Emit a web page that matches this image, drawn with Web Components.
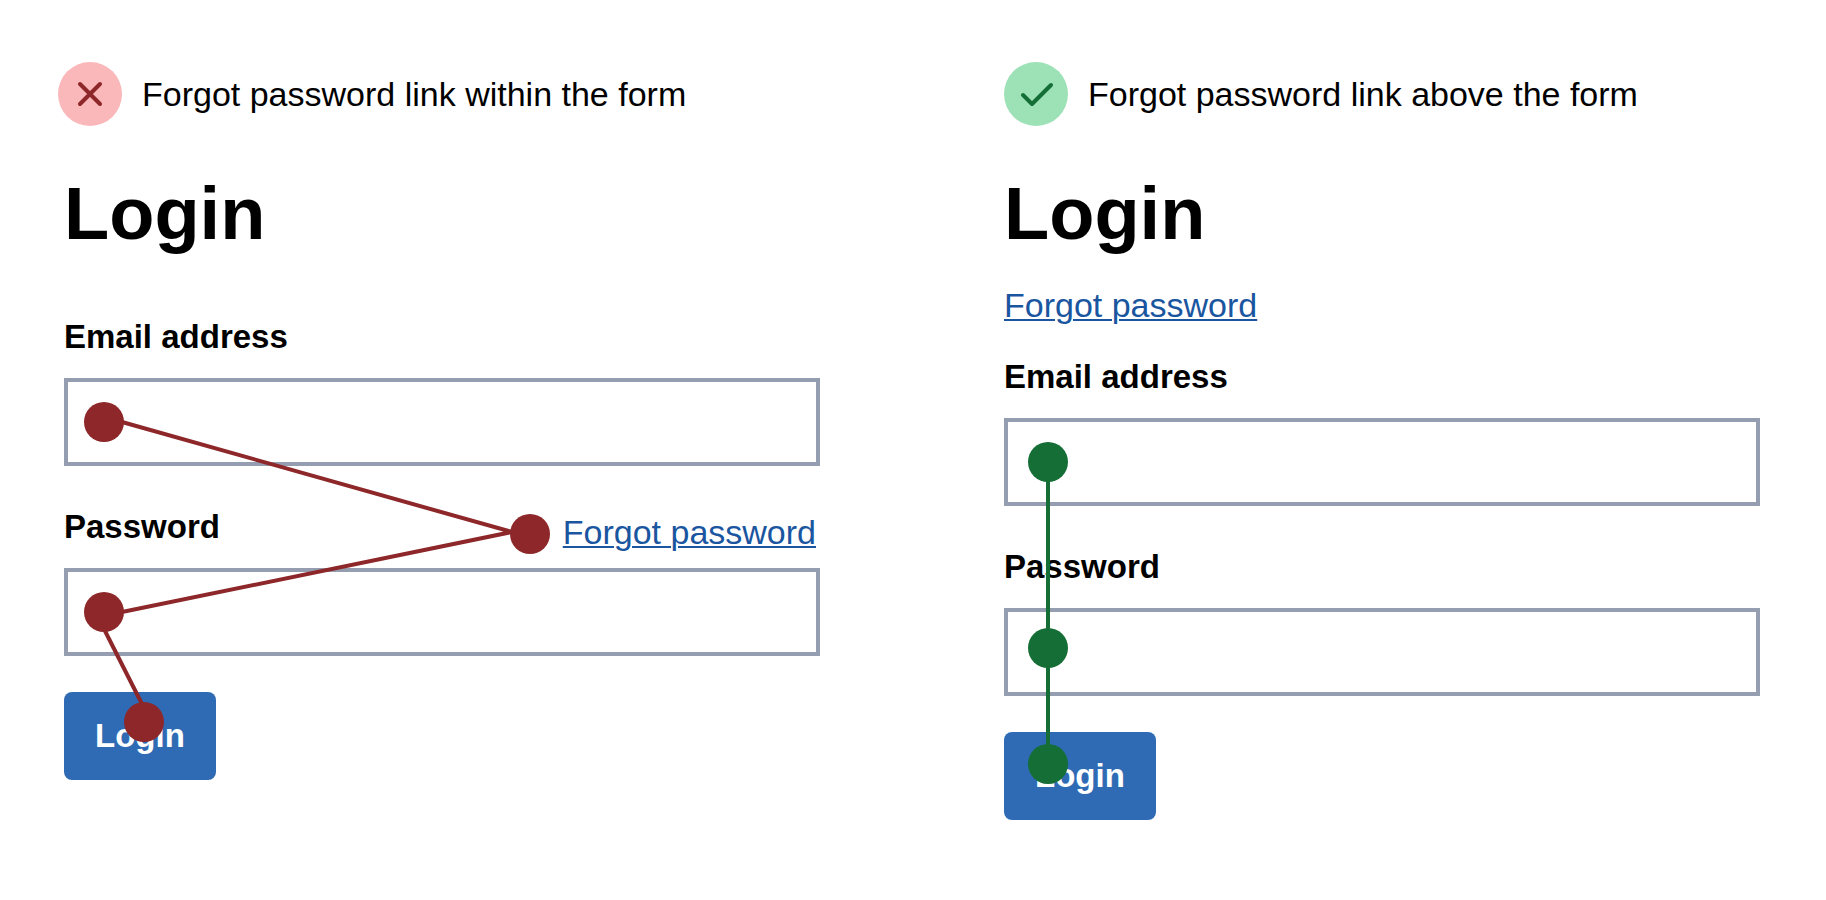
<!DOCTYPE html>
<html lang="en">
<head>
<meta charset="utf-8">
<meta name="viewport" content="width=device-width, initial-scale=1">
<title>Forgot password link placement</title>
<style>
  body {
    margin: 0;
    background: #fff;
    color: #000;
    font-family: "Liberation Sans", Arial, sans-serif;
    font-size: 34px;
    line-height: 42px;
  }
</style>
</head>
<body>
<comparison-board>
  <example-panel verdict="bad">
    <span slot="caption">Forgot password link within the form</span>
    <login-form>
      <text-field label="Email address" type="email"></text-field>
      <text-field label="Password" type="password">
        <text-link slot="aside" href="#forgot">Forgot password</text-link>
      </text-field>
      <action-button slot="action">Login</action-button>
      <focus-path slot="path" tone="bad"
        stops="40 106, -290 218, 40 296, 80 406"
        legs="58 106 -308 216 58 296, 40 313 79 390"></focus-path>
    </login-form>
  </example-panel>
  <example-panel verdict="good">
    <span slot="caption">Forgot password link above the form</span>
    <login-form>
      <text-link slot="intro" href="#forgot">Forgot password</text-link>
      <text-field label="Email address" type="email"></text-field>
      <text-field label="Password" type="password"></text-field>
      <action-button slot="action">Login</action-button>
      <focus-path slot="path" tone="good"
        stops="44 106, 44 292, 44 408"
        legs="44 106 44 408"></focus-path>
    </login-form>
  </example-panel>
</comparison-board>

<script>
  // Shared base: each element renders its template string into an open root.
  class BaseElement extends HTMLElement {
    constructor() {
      super();
      this.attachShadow({ mode: 'open' });
    }
    connectedCallback() {
      this.shadowRoot.innerHTML = this.render();
    }
  }

  class ComparisonBoard extends BaseElement {
    render() {
      return `
        <style>
          :host { display: block; }
          main {
            display: grid;
            grid-template-columns: repeat(2, minmax(0, 1fr));
            gap: 184px;
            padding: 62px 66px 62px 64px;
          }
          @media (max-width: 1500px) {
            main { gap: 64px; }
          }
          @media (max-width: 1100px) {
            main { grid-template-columns: minmax(0, 1fr); }
          }
        </style>
        <main><slot></slot></main>`;
    }
  }

  class VerdictIcon extends BaseElement {
    render() {
      const good = this.getAttribute('verdict') === 'good';
      return `
        <style>
          :host { display: block; flex: none; width: 64px; height: 64px; }
          svg { display: block; }
          path { fill: none; stroke-width: 4; stroke-linecap: round; stroke-linejoin: round; }
        </style>
        <svg width="64" height="64" viewBox="0 0 64 64" role="img" aria-label="${good ? 'Do' : 'Avoid'}">
          <circle cx="32" cy="32" r="32" fill="${good ? '#9de2b6' : '#fab8ba'}"/>
          <path stroke="${good ? '#156e36' : '#8d2729'}"
            d="${good ? 'M19 33L28 42L47 23' : 'M22 22L42 42M42 22L22 42'}"/>
        </svg>`;
    }
  }

  class ExamplePanel extends BaseElement {
    render() {
      const verdict = this.getAttribute('verdict');
      return `
        <style>
          :host { display: block; }
          header { display: flex; align-items: center; gap: 20px; margin-bottom: 48px; }
          :host([verdict="bad"]) header { margin-left: -6px; }
          p { margin: 0; }
        </style>
        <section>
          <header>
            <verdict-icon verdict="${verdict}"></verdict-icon>
            <p><slot name="caption"></slot></p>
          </header>
          <slot></slot>
        </section>`;
    }
  }

  class LoginForm extends BaseElement {
    render() {
      const intro = this.querySelector('[slot="intro"]');
      return `
        <style>
          :host { display: block; }
          h2 { margin: 0; font-size: 74px; line-height: 80px; font-weight: 700; }
          .intro { padding: 30px 0; }
          .spacer { height: 62px; }
          .fields { position: relative; }
          .stack { display: grid; gap: 40px; margin-bottom: 36px; }
        </style>
        <h2>Login</h2>
        ${intro ? '<div class="intro"><slot name="intro"></slot></div>' : '<div class="spacer"></div>'}
        <div class="fields">
          <div class="stack"><slot></slot></div>
          <slot name="action"></slot>
          <slot name="path"></slot>
        </div>`;
    }
  }

  class TextField extends BaseElement {
    render() {
      return `
        <style>
          :host { display: block; }
          .top { display: flex; justify-content: space-between; align-items: flex-end; height: 62px; }
          label { font-size: 33px; font-weight: 700; padding-bottom: 20px; }
          ::slotted([slot="aside"]) { padding: 0 4px 15px 0; }
          input {
            display: block;
            box-sizing: border-box;
            width: 100%;
            height: 88px;
            margin: 0;
            padding: 0 20px;
            border: 4px solid #949eb0;
            border-radius: 0;
            background: #fff;
            font: inherit;
          }
        </style>
        <div class="top">
          <label for="control">${this.getAttribute('label')}</label>
          <slot name="aside"></slot>
        </div>
        <input id="control" type="${this.getAttribute('type')}">`;
    }
  }

  class TextLink extends BaseElement {
    render() {
      return `
        <style>
          :host { display: block; }
          a {
            color: #1a569f;
            text-decoration: underline;
            text-decoration-thickness: 2px;
            text-underline-offset: 2px;
          }
        </style>
        <a href="${this.getAttribute('href')}"><slot></slot></a>`;
    }
  }

  class ActionButton extends BaseElement {
    render() {
      return `
        <style>
          :host { display: block; }
          button {
            display: block;
            height: 88px;
            margin: 0;
            padding: 0 31px;
            border: 0;
            border-radius: 8px;
            background: #2f6bb4;
            color: #fff;
            font: inherit;
            font-size: 33px;
            font-weight: 700;
          }
        </style>
        <button type="button"><slot></slot></button>`;
    }
  }

  // Draws the tab order over the form. Points are "x y" pairs;
  // a negative x counts from the right-hand edge.
  class FocusPath extends BaseElement {
    render() {
      return `
        <style>
          :host { display: block; position: absolute; inset: 0; pointer-events: none; color: #8d2729; }
          :host([tone="good"]) { color: #156e36; }
          svg { display: block; width: 100%; height: 100%; overflow: visible; }
          polyline { fill: none; stroke: currentColor; stroke-width: 4; }
          circle { fill: currentColor; }
        </style>
        <svg aria-hidden="true"></svg>`;
    }
    connectedCallback() {
      super.connectedCallback();
      this.draw();
      new ResizeObserver(() => this.draw()).observe(this);
    }
    points(name) {
      const width = this.clientWidth;
      return this.getAttribute(name).split(',').map(group =>
        group.trim().split(/\s+/).map((n, i) =>
          i % 2 === 0 && Number(n) < 0 ? width + Number(n) : Number(n)));
    }
    draw() {
      const legs = this.points('legs').map(p => `<polyline points="${p.join(' ')}"/>`);
      const stops = this.points('stops').map(([x, y]) => `<circle cx="${x}" cy="${y}" r="20"/>`);
      this.shadowRoot.querySelector('svg').innerHTML = legs.concat(stops).join('');
    }
  }

  customElements.define('comparison-board', ComparisonBoard);
  customElements.define('verdict-icon', VerdictIcon);
  customElements.define('example-panel', ExamplePanel);
  customElements.define('login-form', LoginForm);
  customElements.define('text-field', TextField);
  customElements.define('text-link', TextLink);
  customElements.define('action-button', ActionButton);
  customElements.define('focus-path', FocusPath);
</script>
</body>
</html>
